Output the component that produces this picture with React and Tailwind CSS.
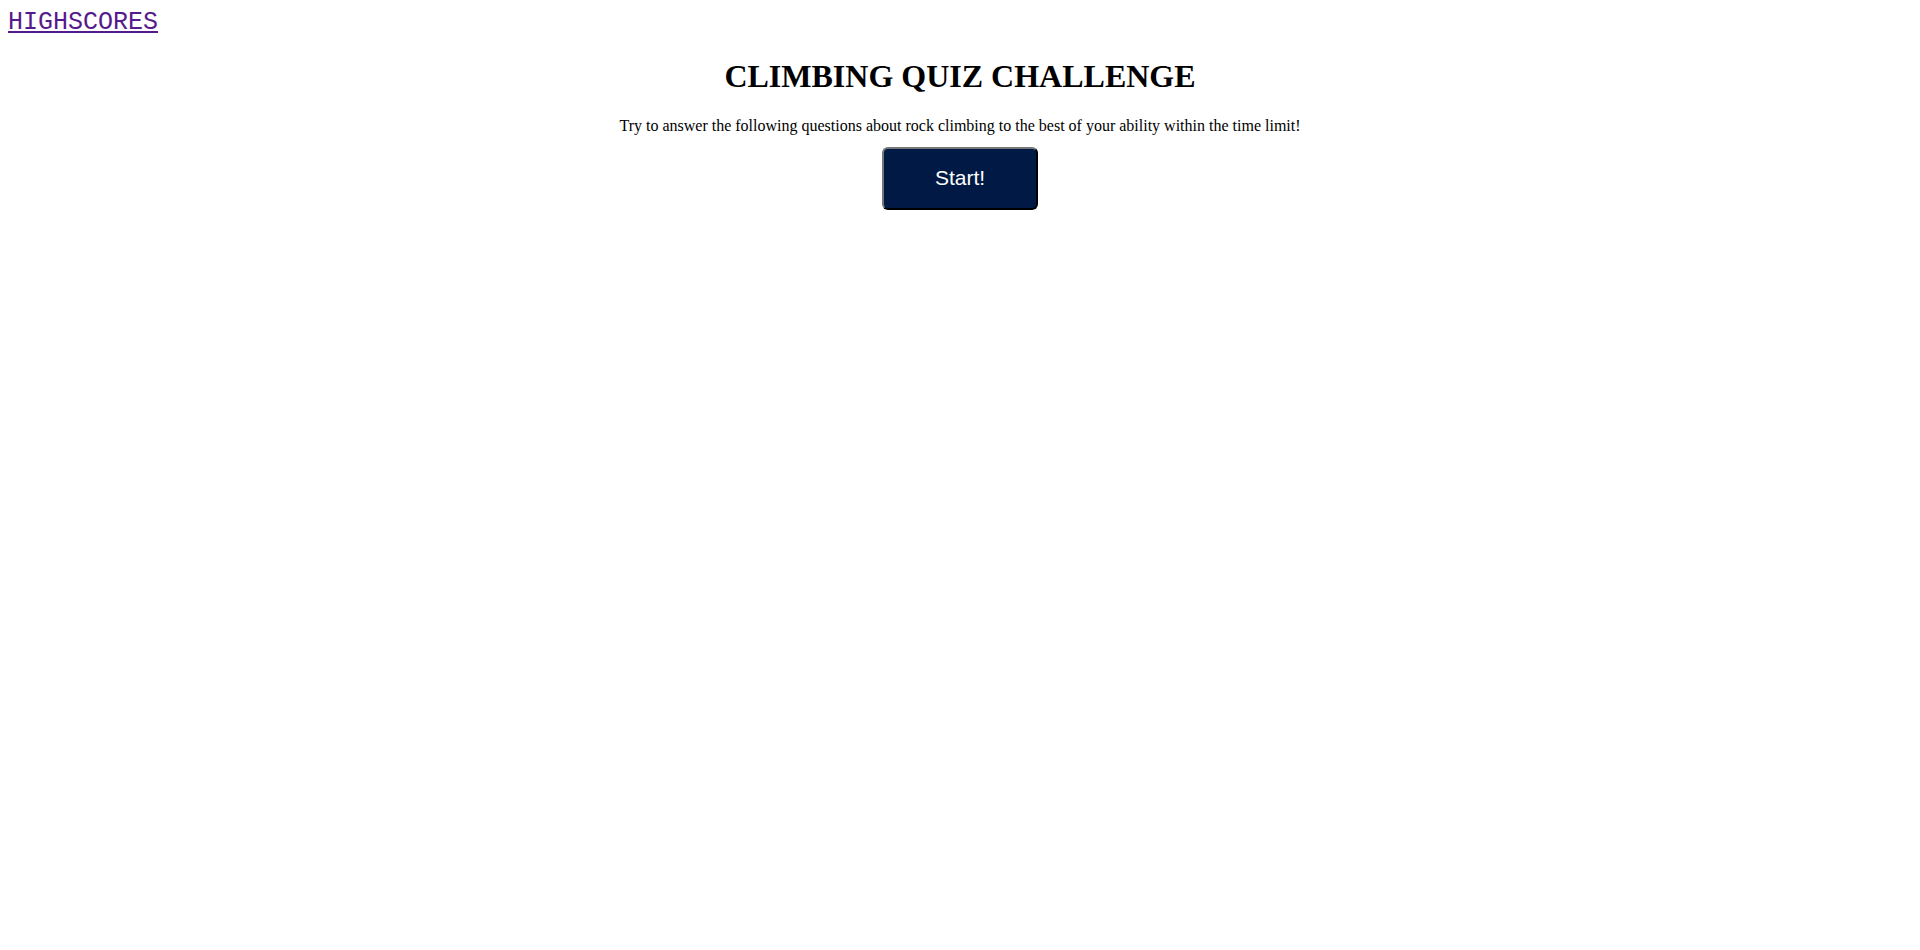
export default function App() {
  return (
    <div className="min-h-[950px] bg-white p-2">
      <div className="h-[29px] leading-[29px]">
        <a
          href="#highscores"
          className="font-['Liberation_Mono','Courier_New',monospace] text-[25px] text-[#551a8b] underline"
        >
          HIGHSCORES
        </a>
      </div>
      <div className="flex flex-col items-center font-['Liberation_Serif','Times_New_Roman',serif]">
        <h1 className="mt-[21px] mb-[21.5px] text-[32px] font-bold leading-[37px] text-black">
          CLIMBING QUIZ CHALLENGE
        </h1>
        <p className="text-[16px] leading-[18px] text-black">
          Try to answer the following questions about rock climbing to the best of your ability within the time limit!
        </p>
        <button className="mt-[12px] h-[63px] w-[156px] rounded-[6px] border-2 border-t-[#767676] border-l-[#767676] border-r-black border-b-black bg-[#001a45] font-['Liberation_Sans',Arial,sans-serif] text-[21px] text-white">
          Start!
        </button>
      </div>
    </div>
  );
}
